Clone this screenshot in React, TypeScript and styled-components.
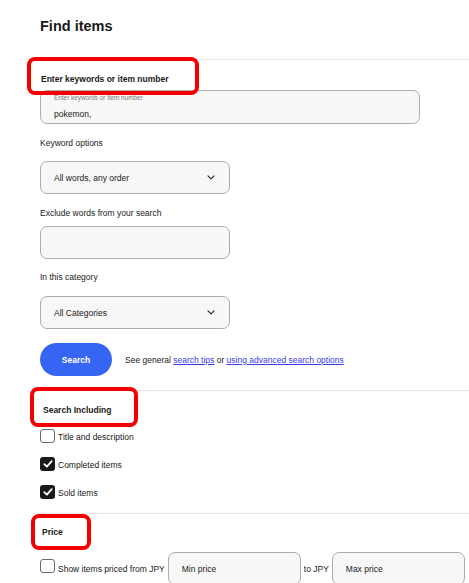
import React from 'react'
import styled, { createGlobalStyle } from 'styled-components'

const GlobalStyle = createGlobalStyle`
  html, body {
    margin: 0;
    padding: 0;
    overflow: hidden;
    background: #fff;
  }
  body {
    font-family: 'Liberation Sans', Arial, sans-serif;
    color: #191919;
  }
  * {
    box-sizing: border-box;
  }
`

// red annotation box drawn over a heading
interface IHighlight {
  $top: number
  $left: number
  $width: number
  $height: number
}

export default function App() {
  return (
    <Page>
      <GlobalStyle />
      <Title>Find items</Title>

      <Section>
        <Heading $mt={13} $ml={1}>
          Enter keywords or item number
          <Highlight $top={-16} $left={-14} $width={172} $height={38} />
        </Heading>
        <KeywordBox $mt={5}>
          <FloatLabel>Enter keywords or item number</FloatLabel>
          <Value>pokemon,</Value>
        </KeywordBox>

        <FieldLabel $mt={13}>Keyword options</FieldLabel>
        <Select $mt={12}>
          <span>All words, any order</span>
          <Chevron />
        </Select>

        <FieldLabel $mt={13}>Exclude words from your search</FieldLabel>
        <TextBox $mt={7} />

        <FieldLabel $mt={12}>In this category</FieldLabel>
        <Select $mt={13}>
          <span>All Categories</span>
          <Chevron />
        </Select>

        <ButtonRow>
          <SearchButton>Search</SearchButton>
          <HelpText>
            See general <Link href="#">search tips</Link> or <Link href="#">using advanced search options</Link>
          </HelpText>
        </ButtonRow>
      </Section>

      <Section>
        <Heading $mt={13} $ml={3}>
          Search Including
          <Highlight $top={-17} $left={-13} $width={108} $height={40} />
        </Heading>
        <CheckList>
          <CheckRow>
            <CheckBox />
            <CheckText>Title and description</CheckText>
          </CheckRow>
          <CheckRow>
            <CheckBox checked />
            <CheckText>Completed items</CheckText>
          </CheckRow>
          <CheckRow>
            <CheckBox checked />
            <CheckText>Sold items</CheckText>
          </CheckRow>
        </CheckList>
      </Section>

      <Section>
        <Heading $mt={12} $ml={2}>
          Price
          <Highlight $top={-12} $left={-11} $width={60} $height={36} />
        </Heading>
        <PriceRow>
          <PriceCheck>
            <CheckBox />
          </PriceCheck>
          <span>Show items priced from JPY</span>
          <PriceInput>Min price</PriceInput>
          <span>to JPY</span>
          <PriceInput>Max price</PriceInput>
        </PriceRow>
      </Section>
    </Page>
  )
}

function Chevron() {
  return (
    <svg width="8" height="5" viewBox="0 0 8 5" fill="none">
      <polyline points="1,0.8 4,3.8 7,0.8" stroke="#2a2a2a" strokeWidth="1.2" strokeLinecap="round" strokeLinejoin="round" />
    </svg>
  )
}

function CheckBox({ checked = false }: { checked?: boolean }) {
  return (
    <StyledBox $checked={checked}>
      {checked && (
        <svg width="14" height="14" viewBox="0 0 14 14" fill="none">
          <polyline points="3.3,7.2 5.9,9.7 10.7,4.2" stroke="#fff" strokeWidth="1.8" strokeLinecap="round" strokeLinejoin="round" />
        </svg>
      )}
    </StyledBox>
  )
}

const Page = styled.div`
  width: 100%;
  padding-left: 32px;
`
const Title = styled.h1`
  margin: 17px 0 0 8px;
  font-size: 14.5px;
  line-height: 18px;
  font-weight: 700;
`
const Section = styled.div`
  border-top: 1px solid #e5e5e5;
  padding: 0 0 14px 8px;
  &:first-of-type {
    margin-top: 24px;
  }
`
const Heading = styled.div<{ $mt: number; $ml: number }>`
  position: relative;
  margin: ${p => p.$mt}px 0 0 ${p => p.$ml}px;
  font-size: 8.5px;
  line-height: 12px;
  font-weight: 700;
`
const Highlight = styled.div<IHighlight>`
  position: absolute;
  top: ${p => p.$top}px;
  left: ${p => p.$left}px;
  width: ${p => p.$width}px;
  height: ${p => p.$height}px;
  border: 4px solid #f40000;
  border-radius: 8px;
  pointer-events: none;
`
const FieldLabel = styled.div<{ $mt: number }>`
  margin-top: ${p => p.$mt}px;
  font-size: 8.5px;
  line-height: 12px;
`
const Field = styled.div<{ $mt: number }>`
  margin-top: ${p => p.$mt}px;
  width: 190px;
  height: 33px;
  background: #f7f7f7;
  border: 1px solid #acacac;
  border-radius: 7px;
  font-size: 8.5px;
`
const KeywordBox = styled(Field)`
  width: 380px;
  height: 34px;
  padding: 3px 13px 0;
  display: flex;
  flex-direction: column;
`
const FloatLabel = styled.div`
  font-size: 6.4px;
  line-height: 8px;
  color: #7a7a7a;
`
const Value = styled.div`
  margin-top: 6px;
  line-height: 12px;
`
const Select = styled(Field)`
  display: flex;
  align-items: center;
  justify-content: space-between;
  padding: 0 14px 0 13px;
`
const TextBox = styled(Field)``
const ButtonRow = styled.div`
  margin-top: 14px;
  display: flex;
  align-items: center;
  gap: 13px;
`
const SearchButton = styled.button`
  width: 72px;
  height: 33px;
  border: none;
  border-radius: 17px;
  background: #3665f3;
  color: #fff;
  font-family: inherit;
  font-size: 8.5px;
  font-weight: 700;
  padding: 0;
`
const HelpText = styled.div`
  font-size: 8.5px;
  line-height: 12px;
`
const Link = styled.a`
  color: #3b3be6;
  text-decoration: underline;
`
const CheckList = styled.div`
  margin-top: 13px;
  display: flex;
  flex-direction: column;
  gap: 14px;
`
const CheckRow = styled.label`
  display: flex;
  align-items: center;
  gap: 3px;
  height: 14px;
  font-size: 8.5px;
  line-height: 12px;
`
const CheckText = styled.span`
  padding-top: 2px;
`
const StyledBox = styled.span<{ $checked: boolean }>`
  flex: none;
  width: 15px;
  height: 14px;
  border-radius: 3px;
  display: flex;
  align-items: center;
  justify-content: center;
  background: ${p => (p.$checked ? '#191919' : '#fff')};
  border: ${p => (p.$checked ? 'none' : '1.3px solid #6b6b6b')};
`
const PriceRow = styled.div`
  margin-top: 14px;
  display: flex;
  align-items: center;
  gap: 2px;
  font-size: 8.5px;
  line-height: 12px;
`
const PriceCheck = styled.span`
  align-self: flex-start;
  margin: 7px 1px 0 0;
  display: flex;
`
const PriceInput = styled.div`
  width: 133px;
  height: 33px;
  background: #f7f7f7;
  border: 1px solid #acacac;
  border-radius: 7px;
  display: flex;
  align-items: center;
  padding-left: 13px;
  margin: 0 1px;
`
